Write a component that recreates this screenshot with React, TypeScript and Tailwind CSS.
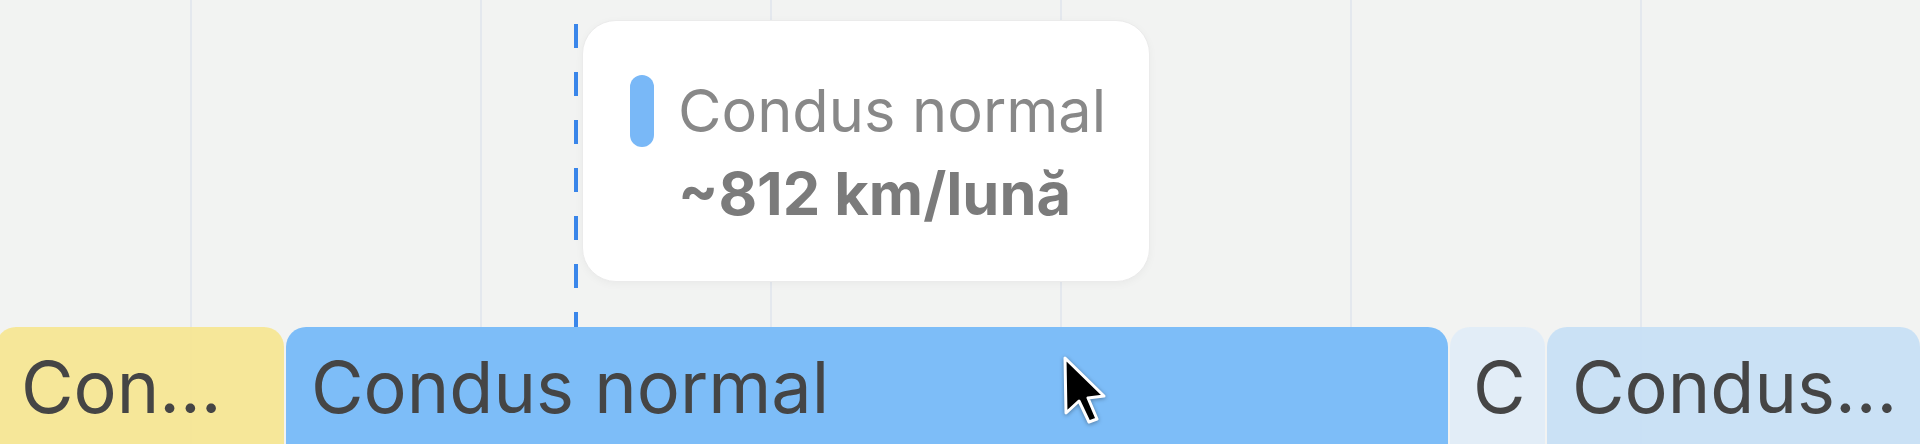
import React from 'react';

type Segment = {
  label: string;
  width: string;
  className: string;
};

// timeline segments along the bottom, left to right
const segments: Segment[] = [
  { label: 'Con...', width: 'w-[288px]', className: 'bg-[#f6e68f]/90 px-[25px]' },
  { label: 'Condus normal', width: 'w-[1162px]', className: 'bg-[#7dbdf8] px-[25px]' },
  { label: 'C', width: 'w-[95px]', className: 'bg-[#e0ecf7]/90 pl-[23px]' },
  { label: 'Condus...', width: 'w-[373px]', className: 'bg-[#c5dff5]/90 px-[25px]' },
];

const gridColumns = [0, 1, 2, 3, 4, 5];

const Pointer = () => (
  <svg width="48" height="72" viewBox="0 0 48 72" className="drop-shadow-[0_1px_2px_rgba(0,0,0,0.35)]">
    <path
      d="M3 3 L4 58 L17 46 L27 67 L35 64 L26 43 L42 41 Z"
      fill="#000"
      stroke="#fff"
      strokeWidth="3"
      strokeLinejoin="round"
    />
  </svg>
);

const App = () => {
  return (
    <div
      className="relative w-full h-[444px] overflow-hidden bg-[#f2f3f2] flex flex-col"
      style={{ fontFamily: 'Inter, "Noto Sans", sans-serif' }}
    >
      {/* vertical grid */}
      <div className="absolute inset-0 flex">
        <div className="w-[190px] shrink-0" />
        {gridColumns.map((c) => (
          <div key={c} className="w-[290px] shrink-0 border-l-2 border-[#e4e8ee]" />
        ))}
      </div>

      <div className="relative flex-1" />

      {/* segments */}
      <div className="relative flex gap-[2px] h-[117px] ml-[-4px] shrink-0">
        {segments.map((s, i) => (
          <div key={i} className={`${s.width} ${s.className} shrink-0 rounded-t-[20px] pt-[17px]`}>
            <div className="text-[72px] leading-[86px] text-[#454545] whitespace-nowrap">{s.label}</div>
          </div>
        ))}
      </div>

      {/* hover marker */}
      <svg className="absolute left-[574px] top-0" width="4" height="327">
        <line x1="2" y1="0" x2="2" y2="327" stroke="#3a86ea" strokeWidth="4" strokeDasharray="24 24" strokeDashoffset="24" />
      </svg>

      {/* tooltip */}
      <div className="absolute left-[582px] top-[20px] w-[568px] h-[262px] bg-white rounded-[34px] border border-[#ebebeb] shadow-[0_2px_8px_rgba(0,0,0,0.04)] pl-[47px] pt-[48px]">
        <div className="flex items-center gap-[24px] h-[83px]">
          <span className="w-[24px] h-[72px] rounded-full bg-[#79b8f7] shrink-0" />
          <span className="text-[59.5px] leading-[83px] text-[#888888]">Condus normal</span>
        </div>
        <div className="pl-[48px] text-[59.5px] leading-[83px] font-bold text-[#7b7b7b]">~812 km/lună</div>
      </div>

      <div className="absolute left-[1062px] top-[355px]">
        <Pointer />
      </div>
    </div>
  );
};

export default App;
